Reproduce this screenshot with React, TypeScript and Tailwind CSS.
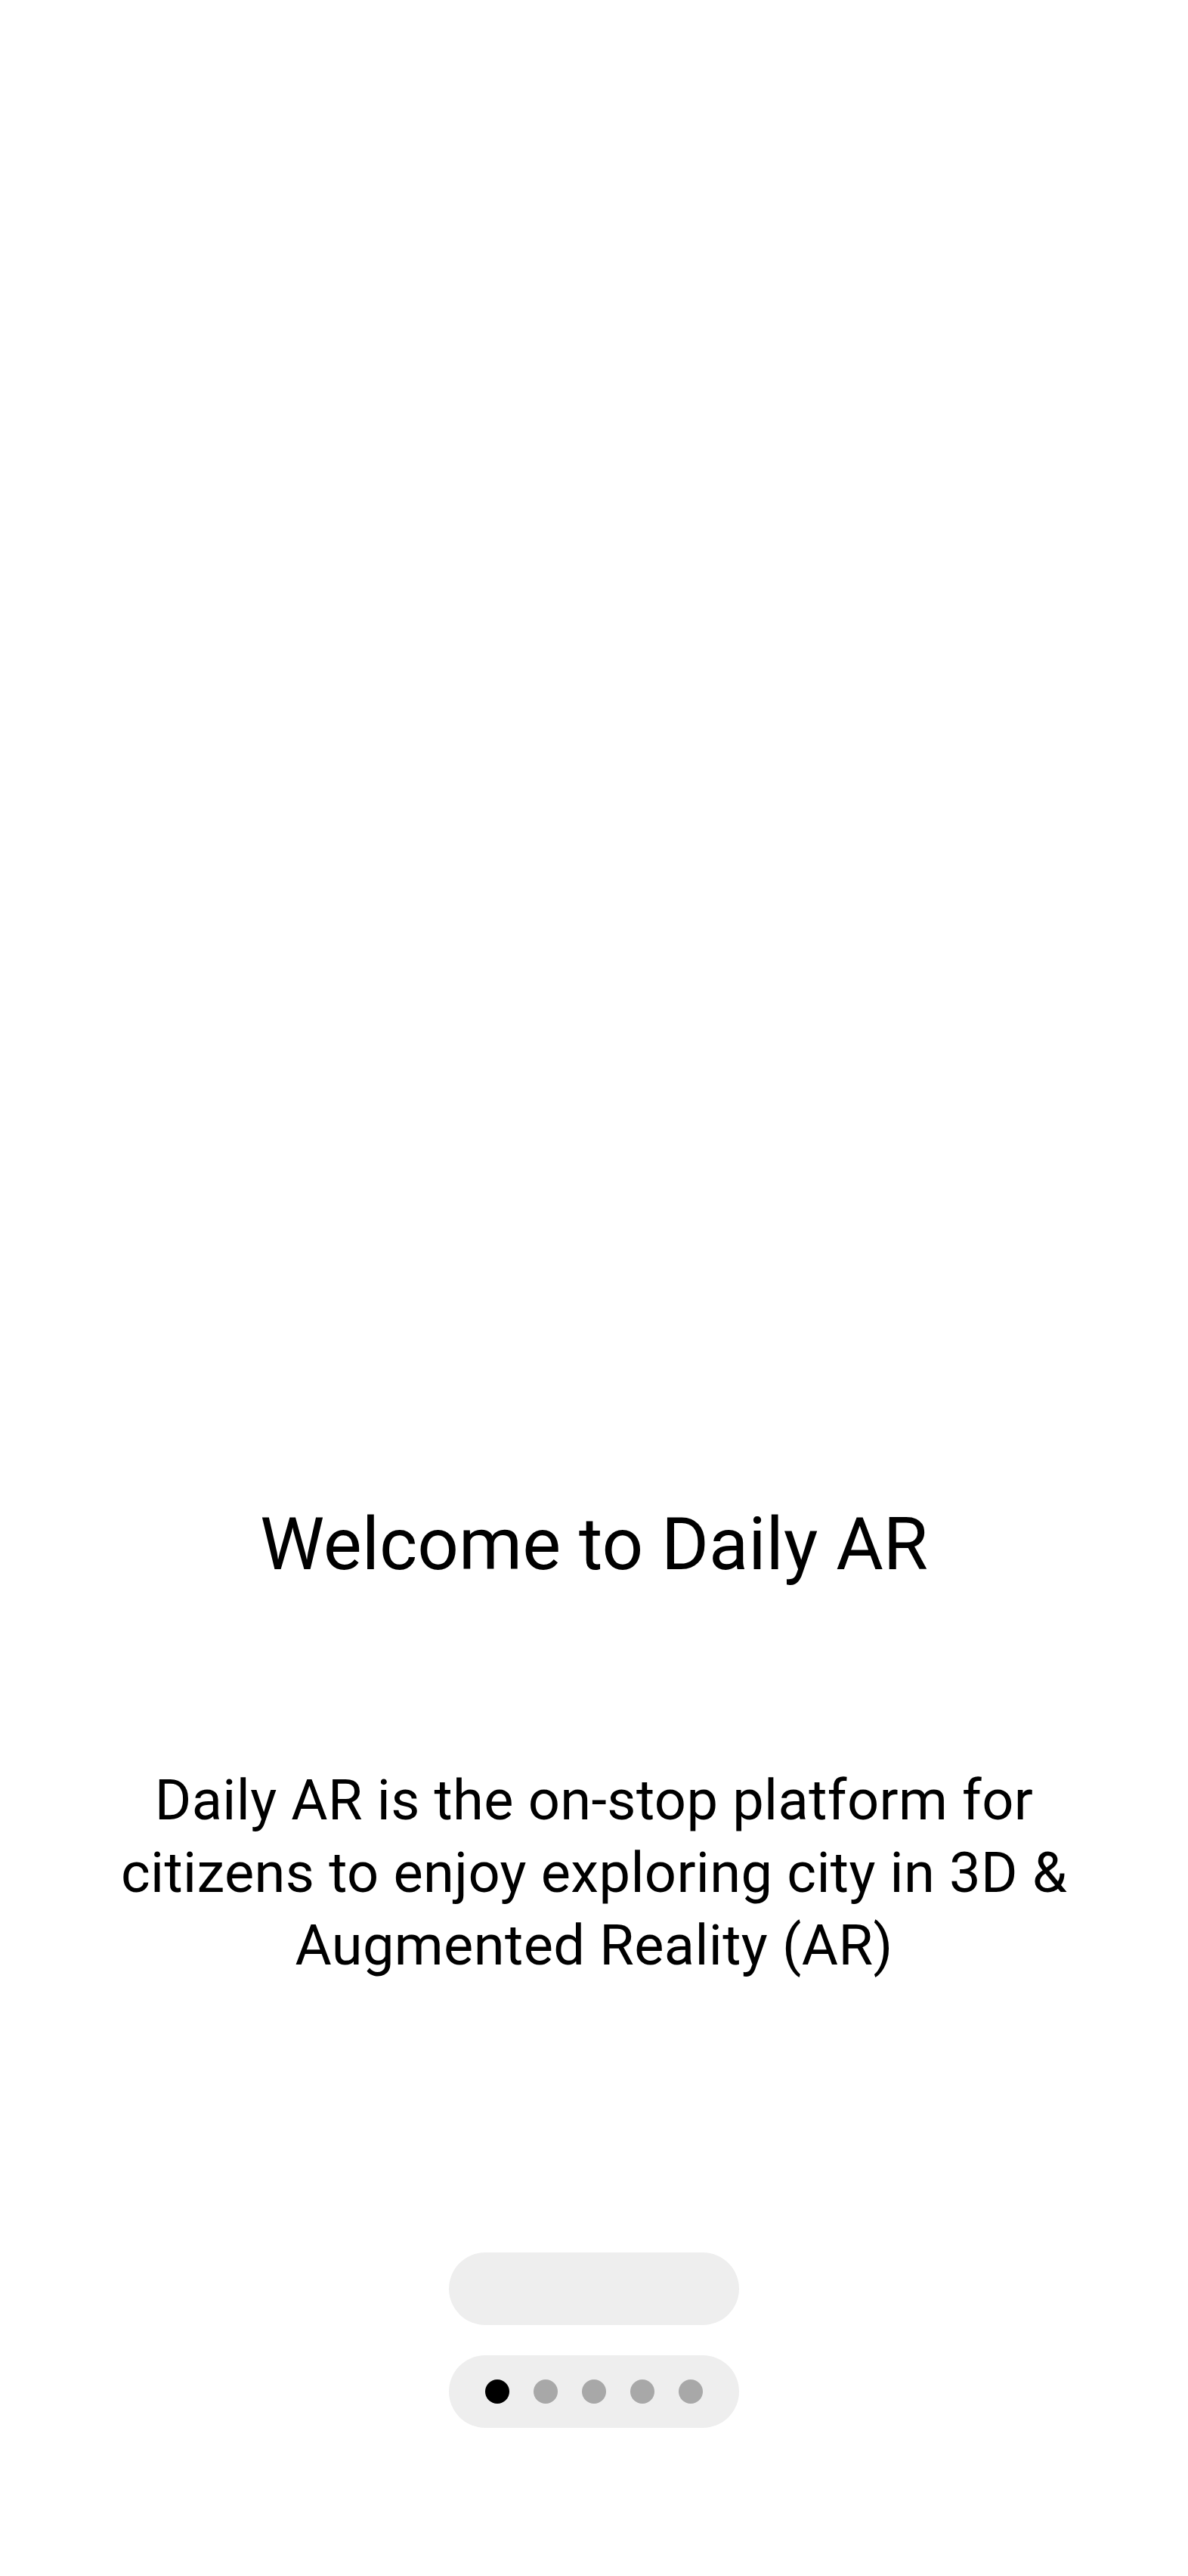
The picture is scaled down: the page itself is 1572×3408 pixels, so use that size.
import React from "react";

export default function App() {
  const dots = [true, false, false, false, false];
  return (
    <div
      className="w-full min-h-[3408px] bg-white flex flex-col items-center text-black"
      style={{ fontFamily: "Roboto, 'Noto Sans', sans-serif" }}
    >
      <h1 className="mt-[1995px] text-[96px] leading-[96px] font-normal whitespace-nowrap text-center">
        Welcome to Daily AR
      </h1>
      <p className="mt-[243px] text-[74px] leading-[96px] tracking-[0.4px] font-normal text-center">
        <span className="block whitespace-nowrap">Daily AR is the on-stop platform for</span>
        <span className="block whitespace-nowrap">citizens to enjoy exploring city in 3D &amp;</span>
        <span className="block whitespace-nowrap">Augmented Reality (AR)</span>
      </p>
      <button className="mt-[358px] w-[384px] h-[96px] rounded-full bg-[#eeeeee]" aria-label="Continue" />
      <div className="mt-[40px] w-[384px] h-[96px] rounded-full bg-[#eeeeee] flex items-center justify-center gap-[32px]">
        {dots.map((active, i) => (
          <span
            key={i}
            className={
              active
                ? "w-[32px] h-[32px] rounded-full bg-black"
                : "w-[32px] h-[32px] rounded-full bg-[#a8a8a8]"
            }
          />
        ))}
      </div>
    </div>
  );
}
